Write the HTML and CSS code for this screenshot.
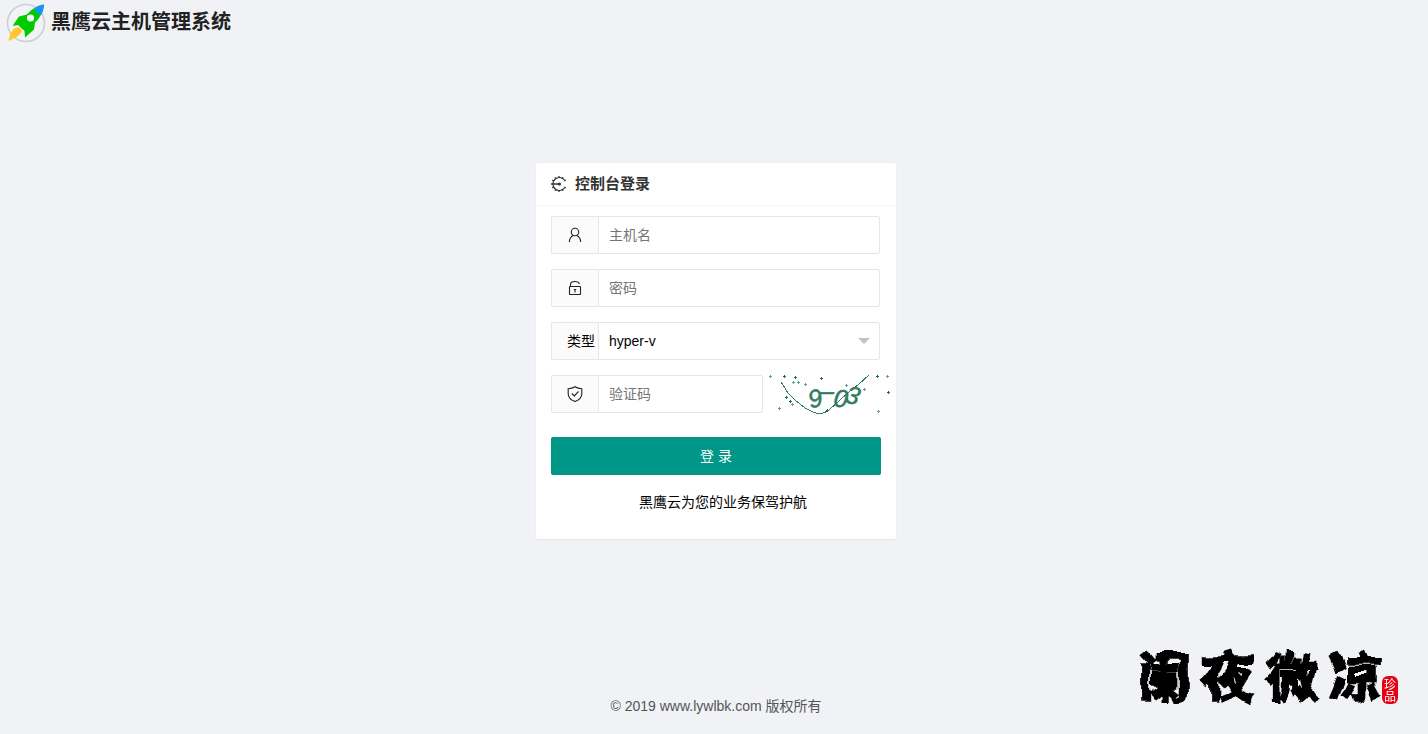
FILE: index.html
```
<!DOCTYPE html>
<html lang="zh-CN">
   <head>
      <meta charset="utf-8">
      <title>控制台登录</title>
      <meta name="viewport" content="width=device-width, initial-scale=1.0"/>
      <link rel="stylesheet" href="styles.css">
   </head>
   <body>
      <!--logo and system name-->
      <header class="header">
         <svg class="logo" viewBox="0 0 40 40" aria-hidden="true">
            <circle cx="20" cy="20" r="18.5" fill="#f2f3f6" stroke="#cdcfd1" stroke-width="1.6"/>
            <path d="M6.500 23L13 13.500L21 11.500C26 5.500 32 2.500 38 1.500C37.500 8 35 14 29 19.500L28 26.500L19 34.500L18.500 28L12 22Z" fill="#00cb00"/>
            <path d="M38 1.500C34.500 2 31.500 3 28.500 5C29.500 8.500 31.500 11 35 12C37 8.500 38 5 38 1.500Z" fill="#1296fa"/>
            <circle cx="24.500" cy="15" r="3.600" fill="#f6f7f9"/>
            <path d="M2.500 38C4 31.500 5.500 26.500 9.500 25C13 23.800 17 25.500 15.500 29C13.500 33 8 35.500 2.500 38Z" fill="#ffc62b"/>
         </svg>
         <h1>黑鹰云主机管理系统</h1>
      </header>

      <!--login box-->
      <main class="main">
         <form class="card" onsubmit="return false">
            <div class="card-header">
               <svg class="icon-title" viewBox="0 0 16 16" aria-hidden="true">
                  <path d="M13.500 4A6.500 6.500 0 1 0 13.500 12" fill="none" stroke="#333" stroke-width="1.200"/>
                  <path d="M8 0V2M4 1.200L5 3M1.200 4L3 5M0 8H9M1.200 12L3 11M4 14.800L5 13M8 16V14M12 1.200L11 3M12 14.800L11 13M14.800 4L13 5M14.800 12L13 11" fill="none" stroke="#333" stroke-width="1.300"/>
                  <circle cx="8.500" cy="8" r="1.600" fill="#333"/>
               </svg>
               <h2>控制台登录</h2>
            </div>
            <div class="card-body">
               <div class="row">
                  <label class="label" for="host" aria-label="主机名">
                     <svg class="icon" viewBox="0 0 16 16"><circle cx="8" cy="5" r="3.700"/><path d="M2.300 15C2.500 11.500 4 9.500 6.200 8.500M9.800 8.500C12 9.500 13.500 11.500 13.700 15"/></svg>
                  </label>
                  <input class="input" id="host" type="text" placeholder="主机名">
               </div>
               <div class="row">
                  <label class="label" for="pwd" aria-label="密码">
                     <svg class="icon" viewBox="0 0 16 16"><rect x="2.500" y="6.500" width="11" height="8" rx="0.500"/><path d="M3.500 6V4.500C3.500 0.500 11.500 0.500 12.500 4"/><path d="M6.800 9.500H9.200M8 9V12.500"/></svg>
                  </label>
                  <input class="input" id="pwd" type="password" placeholder="密码">
               </div>
               <div class="row row-select">
                  <label class="label" for="type">类型</label>
                  <select class="input" id="type">
                     <option>hyper-v</option>
                  </select>
               </div>
               <div class="row row-code">
                  <label class="label" for="code" aria-label="验证码">
                     <svg class="icon" viewBox="0 0 16 16"><path d="M8 0.700C10 2 12.500 2.600 14.800 2.700V8C14.800 11.500 12 14 8 15.500C4 14 1.200 11.500 1.200 8V2.700C3.500 2.600 6 2 8 0.700Z"/><path d="M4.800 7.500L7.300 10L11.500 5.500"/></svg>
                  </label>
                  <input class="input" id="code" type="text" placeholder="验证码">
                  <svg class="captcha" viewBox="0 0 122 42">
                     <path class="line" d="M13 8Q17 14 20 19Q24 24 37 34Q46 39 52 40Q57 39 61 36L72 26Q80 18 90 11L101 1"/>
                     <path class="dot" d="M1 2.500h3M2.500 1v3M24 8.500h3M25.500 7v3M29 8.500h3M30.500 7v3M36 10.500h3M37.500 9v3M77 11.500h3M78.500 10v3M95 15.500h3M96.500 14v3M118 2.500h3M119.500 1v3M109 37.500h3M110.500 36v3M10 34.500h3M11.500 33v3M23 30.500h3M24.500 29v3"/>
                     <path class="dot dark" d="M15 2.500h3M16.500 1v3M26 3.500h3M27.500 2v3M52 4.500h3M53.500 3v3M108 2.500h3M109.500 1v3M119 18.500h3M120.500 17v3M58 36.500h3M59.500 35v3M17 23.500h3M18.500 22v3M21 27.500h3M22.500 26v3"/>
                     <text x="40" y="33" transform="rotate(-14 47 24)">9</text>
                     <text x="52" y="26">–</text>
                     <text x="66" y="33" transform="rotate(8 72 24)">0</text>
                     <text x="78" y="30" transform="rotate(16 85 21)">3</text>
                  </svg>
               </div>
               <button class="btn" type="submit">登 录</button>
               <p class="slogan">黑鹰云为您的业务保驾护航</p>
            </div>
         </form>
      </main>

      <footer class="footer">© 2019 www.lywlbk.com 版权所有</footer>

      <!--signature in the corner-->
      <div class="sign">
         <div class="brush"><span>阑</span><span>夜</span><span>微</span><span>凉</span></div>
         <div class="seal">珍品</div>
      </div>
      <svg class="defs" width="0" height="0" aria-hidden="true">
         <filter id="ink" x="-5%" y="-10%" width="110%" height="120%" color-interpolation-filters="sRGB">
            <feTurbulence type="fractalNoise" baseFrequency="0.050" numOctaves="1" seed="4"/>
            <feDisplacementMap in="SourceGraphic" scale="14" xChannelSelector="R" yChannelSelector="G"/>
         </filter>
      </svg>
   </body>
</html>
```
FILE: styles.css
```
* {
box-sizing: border-box;
}
body {
margin: 0;
min-height: 100vh;
display: flex;
flex-direction: column;
background-color: #f0f2f5;
color: #000;
font: 14px/24px "Liberation Sans", "Noto Sans CJK SC", sans-serif;
}
h1, h2, p {
margin: 0;
}
.header {
display: flex;
gap: 5px;
padding: 3px 6px 0;
}
.logo {
width: 40px;
height: 40px;
}
.header h1 {
font-size: 20px;
line-height: 38px;
color: #222;
}
.main {
flex: 1;
padding: 120px 0 0 4px;
}
.card {
width: 360px;
margin: 0 auto;
background-color: #fff;
border-radius: 2px;
box-shadow: 0 1px 2px rgba(0, 0, 0, 0.05);
}
.card-header {
display: flex;
align-items: center;
gap: 8px;
height: 43px;
padding: 0 15px;
border-bottom: 1px solid #f6f6f6;
}
.card-header h2 {
font-size: 15px;
color: #333;
}
.icon-title {
width: 16px;
height: 16px;
}
.card-body {
padding: 10px 15px 25px;
}
/* form rows */
.row {
position: relative;
display: flex;
height: 38px;
margin: 0 1px 15px 0;
}
.label {
flex: none;
width: 47px;
padding: 6px 0 0 15px;
border: 1px solid #e6e6e6;
border-right: 0;
border-radius: 2px 0 0 2px;
background-color: #fbfbfb;
white-space: nowrap;
}
.icon {
display: block;
width: 16px;
height: 16px;
margin-top: 4px;
fill: none;
stroke: #222;
stroke-width: 1.1;
}
.input {
flex: 1;
min-width: 0;
height: 38px;
padding: 0 10px;
border: 1px solid #e6e6e6;
border-radius: 0 2px 2px 0;
background-color: #fff;
color: #000;
font: inherit;
outline: 0;
appearance: none;
}
.input::placeholder {
color: #757575;
}
.row-select::after {
content: "";
position: absolute;
top: 16px;
right: 10px;
border: 6px solid transparent;
border-top-color: #c2c2c2;
border-bottom: 0;
pointer-events: none;
}
.row-code {
margin: 0 -9px 24px 0;
}
.captcha {
flex: none;
width: 122px;
height: 42px;
margin: -1px 0 0 5px;
shape-rendering: crispEdges;
}
.captcha .line {
fill: none;
stroke: #327a60;
}
.captcha .dot {
stroke: #5aa58b;
}
.captcha .dark {
stroke: #25694f;
}
.captcha text {
font: italic 25px "Liberation Sans", sans-serif;
fill: #327a60;
stroke: #327a60;
stroke-width: 0.5;
}
.btn {
display: block;
width: 100%;
height: 38px;
border: 0;
border-radius: 2px;
background-color: #009688;
color: #fff;
font: inherit;
cursor: pointer;
}
.slogan {
padding: 15px 0 0 14px;
text-align: center;
}
.footer {
padding: 0 0 16px 4px;
text-align: center;
color: #555;
}
.sign {
position: fixed;
right: 30px;
bottom: 30px;
display: flex;
align-items: flex-end;
}
.brush {
display: flex;
gap: 12px;
font: bold 52px/58px "Noto Sans CJK SC", sans-serif;
-webkit-text-stroke: 2px #000;
filter: url(#ink);
}
.seal {
width: 16px;
padding: 2px;
border-radius: 6px;
background-color: #e60012;
color: #fff;
font: 12px/12px "Noto Sans CJK SC", sans-serif;
}
.defs {
position: absolute;
}
```
